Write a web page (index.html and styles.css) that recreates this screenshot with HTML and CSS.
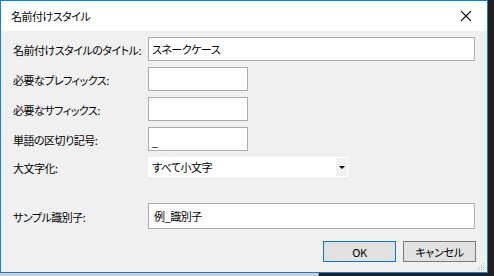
FILE: index.html
```html
<!DOCTYPE html>
<html lang="ja">
<head>
    <meta charset="UTF-8">
    <meta name="viewport" content="width=device-width, initial-scale=1.0">
    <title>名前付けスタイル</title>
    <link rel="stylesheet" href="styles.css">
</head>
<body>
    <div class="desktop">
        <div class="dialog">
            <div class="title-bar">
                <span class="title">名前付けスタイル</span>
                <svg class="close" width="12" height="12" viewBox="0 0 12 12">
                    <path d="M1 1 L11 11 M11 1 L1 11" stroke="#111" stroke-width="1.1" fill="none"/>
                </svg>
            </div>

            <div class="content">
                <div class="form">
                    <label class="label">名前付けスタイルのタイトル:</label>
                    <input class="field wide" type="text" value="スネークケース">

                    <label class="label">必要なプレフィックス:</label>
                    <input class="field short" type="text" value="">

                    <label class="label">必要なサフィックス:</label>
                    <input class="field short" type="text" value="">

                    <label class="label">単語の区切り記号:</label>
                    <input class="field short sep" type="text" value="_">

                    <label class="label">大文字化:</label>
                    <div class="combo">
                        <span>すべて小文字</span>
                        <span class="combo-btn"><i class="arrow"></i></span>
                    </div>
                </div>

                <div class="form sample">
                    <label class="label">サンプル識別子:</label>
                    <input class="field wide tall" type="text" value="例_識別子">
                </div>

                <div class="buttons">
                    <button class="btn default">OK</button>
                    <button class="btn">キャンセル</button>
                </div>

                <svg class="grip" width="8" height="8" viewBox="0 0 8 8">
                    <rect x="6" y="0" width="1" height="1" fill="#b8b8b8"/>
                    <rect x="4" y="2" width="1" height="1" fill="#b8b8b8"/>
                    <rect x="6" y="2" width="1" height="1" fill="#b8b8b8"/>
                    <rect x="2" y="4" width="1" height="1" fill="#b8b8b8"/>
                    <rect x="4" y="4" width="1" height="1" fill="#b8b8b8"/>
                    <rect x="6" y="4" width="1" height="1" fill="#b8b8b8"/>
                    <rect x="0" y="6" width="1" height="1" fill="#b8b8b8"/>
                    <rect x="2" y="6" width="1" height="1" fill="#b8b8b8"/>
                    <rect x="4" y="6" width="1" height="1" fill="#b8b8b8"/>
                    <rect x="6" y="6" width="1" height="1" fill="#b8b8b8"/>
                </svg>
            </div>
        </div>
        <div class="behind">
            <div class="behind-light"></div>
        </div>
    </div>
</body>
</html>
```

FILE: styles.css
```css
* {
    box-sizing: border-box;
}
html, body {
    margin: 0;
    padding: 0;
}
body {
    font-family: "Noto Sans CJK JP", "Noto Sans", sans-serif;
    font-feature-settings: "palt";
    font-size: 11px;
    letter-spacing: -0.5px;
    color: #000;
    background-color: #1e1e1e;
    width: 494px;
    height: 276px;
    overflow: hidden;
}
.desktop {
    width: 494px;
    height: 276px;
}
.dialog {
    position: relative;
    width: 488px;
    height: 273px;
    border: 1px solid #1a7fd4;
    background-color: #f0f0f0;
    display: flex;
    flex-direction: column;
}
.title-bar {
    height: 30px;
    background-color: #fff;
    display: flex;
    align-items: center;
    justify-content: space-between;
    padding: 0 11px 0 10px;
}
.title {
    line-height: 1;
    margin-top: 1px;
}
.close {
    display: block;
    margin-right: 4px;
}
.content {
    position: relative;
    flex: 1;
    padding: 6px 11px 0 11px;
}
.form {
    display: grid;
    grid-template-columns: 136px 1fr;
    row-gap: 6px;
    align-items: center;
}
.label {
    line-height: 16px;
    padding-top: 2px;
    padding-left: 1px;
    white-space: nowrap;
}
.field {
    height: 24px;
    border: 1px solid #adadad;
    background-color: #fff;
    font-family: inherit;
    font-feature-settings: "palt";
    font-size: 11px;
    letter-spacing: -0.5px;
    color: #000;
    padding: 0 3px;
    margin: 0;
    outline: none;
}
.field.wide {
    width: 327px;
}
.field.short {
    width: 100px;
}
.field.sep {
    padding-top: 4px;
}
.field.tall {
    height: 26px;
    padding-left: 5px;
}
.combo {
    width: 200px;
    height: 20px;
    background-color: #fff;
    border: 1px solid #fff;
    display: flex;
    align-items: center;
    justify-content: space-between;
    padding-left: 3px;
}
.combo-btn {
    width: 11px;
    height: 18px;
    background-color: #f0f0f0;
    display: flex;
    align-items: center;
    justify-content: center;
}
.arrow {
    display: block;
    width: 0;
    height: 0;
    border-left: 3px solid transparent;
    border-right: 3px solid transparent;
    border-top: 3px solid #000;
}
.sample {
    margin-top: 26px;
}
.buttons {
    display: flex;
    justify-content: flex-end;
    gap: 7px;
    margin-top: 12px;
}
.btn {
    width: 73px;
    height: 21px;
    background-color: #e1e1e1;
    border: 1px solid #7a7a7a;
    font-family: inherit;
    font-feature-settings: "palt";
    font-size: 11px;
    letter-spacing: -0.3px;
    color: #000;
    padding: 0;
    margin: 0;
}
.btn.default {
    border-color: #0078d7;
}
.grip {
    position: absolute;
    right: 2px;
    bottom: 1px;
}
.behind {
    height: 3px;
    display: flex;
}
.behind-light {
    width: 319px;
    background-color: #cfcfcf;
    border-right: 1px solid #9a9a9a;
}
```
